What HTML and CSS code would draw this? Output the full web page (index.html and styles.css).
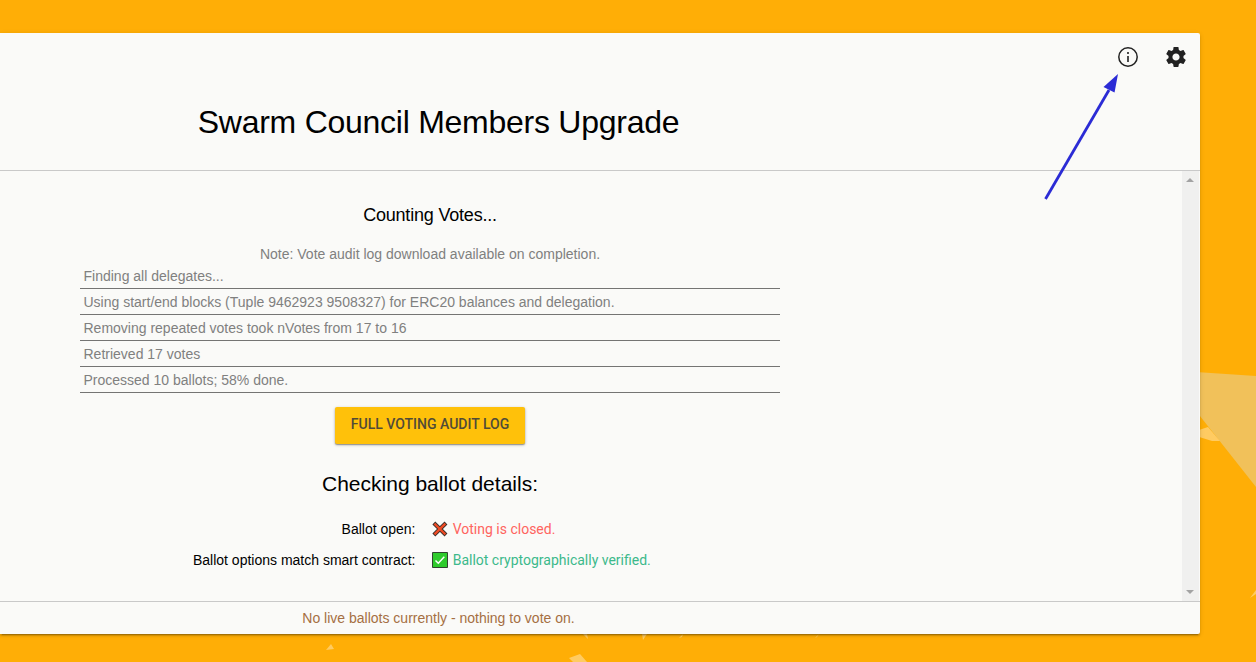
FILE: index.html
```html
<!DOCTYPE html>
<html lang="en">
<head>
<meta charset="utf-8">
<title>Swarm Council Members Upgrade</title>
<link rel="stylesheet" href="styles.css">
</head>
<body>
<svg class="backdrop" viewBox="0 0 1256 662" aria-hidden="true">
  <path fill="#f1c15a" d="M1196 372L1256 376V487L1196 411Z"/>
  <path fill="#ffcb62" d="M1196 431L1208 427L1220 441L1212 441L1196 436Z"/>
  <path fill="#ffcb62" d="M1250 598L1256 590V594ZM326 650L331 644L334 649ZM569 658L580 654L587 662H573ZM583 634H587L588 639ZM642 634H647L643 640ZM679 638L683 634L682 637ZM815 638L819 634L817 637Z"/>
</svg>
<main class="card">
  <header class="card-header">
    <div class="actions">
      <svg class="icon" viewBox="0 0 24 24" fill="#212121"><circle cx="12" cy="12" r="9.200" fill="none" stroke="#212121" stroke-width="1.500"/><path d="M11.200 11h1.600v6h-1.600zM11.200 7h1.600v2h-1.600z"/></svg>
      <svg class="icon" viewBox="0 0 24 24" fill="#212121"><path d="M19.430 12.980c.04-.32.07-.64.07-.98s-.03-.66-.07-.98l2.110-1.650c.19-.15.24-.42.12-.64l-2-3.460c-.12-.22-.39-.3-.61-.22l-2.490 1c-.52-.4-1.080-.73-1.690-.98l-.38-2.650C14.460 2.180 14.250 2 14 2h-4c-.25 0-.46.18-.49.42l-.38 2.650c-.61.25-1.170.59-1.690.98l-2.490-1c-.23-.09-.49 0-.61.22l-2 3.460c-.13.22-.07.49.12.64l2.110 1.650c-.04.32-.07.65-.07.98s.03.66.07.98l-2.110 1.650c-.19.15-.24.42-.12.64l2 3.460c.12.22.39.3.61.22l2.490-1c.52.4 1.080.73 1.690.98l.38 2.650c.03.24.24.42.49.42h4c.25 0 .46-.18.49-.42l.38-2.650c.61-.25 1.170-.59 1.690-.98l2.490 1c.23.09.49 0 .61-.22l2-3.460c.12-.22.07-.49-.12-.64l-2.110-1.650zM12 15.600c-1.990 0-3.600-1.610-3.600-3.600s1.610-3.600 3.600-3.600 3.600 1.610 3.600 3.600-1.610 3.600-3.600 3.600z"/></svg>
    </div>
    <h1 class="title">Swarm Council Members Upgrade</h1>
  </header>
  <div class="content">
    <section class="ballot">
      <h2 class="counting">Counting Votes...</h2>
      <p class="note">Note: Vote audit log download available on completion.</p>
      <ul class="log">
        <li>Finding all delegates...</li>
        <li>Using start/end blocks (Tuple 9462923 9508327) for ERC20 balances and delegation.</li>
        <li>Removing repeated votes took nVotes from 17 to 16</li>
        <li>Retrieved 17 votes</li>
        <li>Processed 10 ballots; 58% done.</li>
      </ul>
      <button class="audit">FULL VOTING AUDIT LOG</button>
      <h2 class="checking">Checking ballot details:</h2>
      <div class="checks">
        <span class="label open">Ballot open:</span>
        <svg class="mark" viewBox="0 0 16 16"><path d="M2.800 3L13 13M13 3L2.800 13" stroke="#3b302b" stroke-width="4.600" stroke-linecap="square" stroke-linejoin="round" transform="translate(.8 .8) scale(.9)"/><path d="M2.800 3L13 13M13 3L2.800 13" stroke="#f04b24" stroke-width="2.600"  stroke-linecap="square" transform="translate(.8 .8) scale(.9)"/></svg>
        <span class="result closed">Voting is closed.</span>
        <span class="label match">Ballot options match smart contract:</span>
        <svg class="mark" viewBox="0 0 16 16"><path d="M.5 .5H15.500V15.500H.5Z" fill="#2ecb2c" stroke="#30452f"/><path d="M3.500 8.500L6.300 11.200L12.300 4.800" fill="none" stroke="#fff" stroke-width="1.500"/></svg>
        <span class="result verified">Ballot cryptographically verified.</span>
      </div>
    </section>
    <div class="scrollbar">
      <svg width="8" height="4" viewBox="0 0 8 4"><path d="M0 4L4 0L8 4Z" fill="#a3a3a3"/></svg>
      <svg width="8" height="4" viewBox="0 0 8 4"><path d="M0 0L4 4L8 0Z" fill="#a3a3a3"/></svg>
    </div>
  </div>
  <footer class="card-footer"><span class="status">No live ballots currently - nothing to vote on.</span></footer>
</main>
<svg class="arrow" viewBox="0 0 1256 662" aria-hidden="true">
  <path d="M1045.500 199L1109 90" stroke="#2b2bd5" stroke-width="2.800"/>
  <path d="M1118 74L1103.500 87L1114.500 92.500Z" fill="#2b2bd5"/>
</svg>
</body>
</html>
```
FILE: styles.css
```css
* { box-sizing: border-box; }
body {
  margin: 0;
  height: 662px;
  padding-top: 33px;
  overflow: hidden;
  background: #ffae06;
  font-family: "Liberation Sans", Arial, sans-serif;
  font-size: 14px;
  color: #000;
}
h1, h2, p, ul { margin: 0; padding: 0; font-weight: 400; }
.backdrop, .arrow { position: absolute; left: 0; top: 0; width: 1256px; height: 662px; pointer-events: none; }
.card {
  position: relative;
  display: flex;
  flex-direction: column;
  width: 1200px;
  height: 601px;
  background: #fafaf8;
  border-radius: 0 2px 2px 0;
  box-shadow: 0 3px 1px -2px rgba(0,0,0,.2), 0 2px 2px rgba(0,0,0,.14), 0 1px 5px rgba(0,0,0,.12);
}
.card-header { height: 138px; border-bottom: 1px solid #c9c9c9; }
.actions { display: flex; justify-content: flex-end; gap: 24px; padding: 12px 12px 0 0; height: 36px; }
.icon { width: 24px; height: 24px; }
.title { width: 877px; padding-top: 33px; text-align: center; font-size: 32px; line-height: 40px; letter-spacing: -.26px; }
.content { display: flex; justify-content: space-between; height: 430px; }
.ballot { display: flex; flex-direction: column; align-items: center; width: 700px; margin-left: 80px; }
.counting { margin-top: 32px; font-size: 18px; line-height: 24px; letter-spacing: -.2px; }
.note { margin-top: 17px; line-height: 20px; color: #80807f; }
.log { width: 700px; list-style: none; color: #80807f; }
.log li { height: 26px; padding: 5px 0 0 3.5px; line-height: 16px; border-bottom: 1px solid #747473; }
.log li:first-child { height: 25px; padding-top: 4px; }
.audit {
  width: 190px;
  height: 37px;
  margin-top: 14px;
  padding: 0 0 3px;
  border: 0;
  border-radius: 2px;
  background: #ffc10a;
  color: #514b38;
  font: 500 14px Roboto, sans-serif;
  box-shadow: 0 1px 3px rgba(0,0,0,.3), 0 1px 1px rgba(0,0,0,.25);
}
.checking { margin-top: 26px; font-size: 21px; line-height: 28px; }
.checks {
  display: grid;
  grid-template-columns: 335.5px 16px auto;
  grid-template-rows: 31px 31px;
  align-items: center;
  align-self: stretch;
  margin-top: 15px;
}
.label { text-align: right; }
.mark { width: 16px; height: 16px; margin-left: 16px; overflow: visible; }
.result { margin-left: 21.2px; font-family: Roboto, sans-serif; }
.closed { color: #ff6460; }
.verified { color: #3cb98b; }
.scrollbar {
  display: flex;
  flex-direction: column;
  justify-content: space-between;
  align-items: center;
  width: 17px;
  margin-right: 1px;
  padding: 7px 1px 7px 0;
  background: #f0f0ef;
}
.card-footer { width: 1200px; height: 33px; border-top: 1px solid #c9c9c9; line-height: 32px; color: #a56f43; }
.status { display: block; width: 877px; text-align: center; }
```
